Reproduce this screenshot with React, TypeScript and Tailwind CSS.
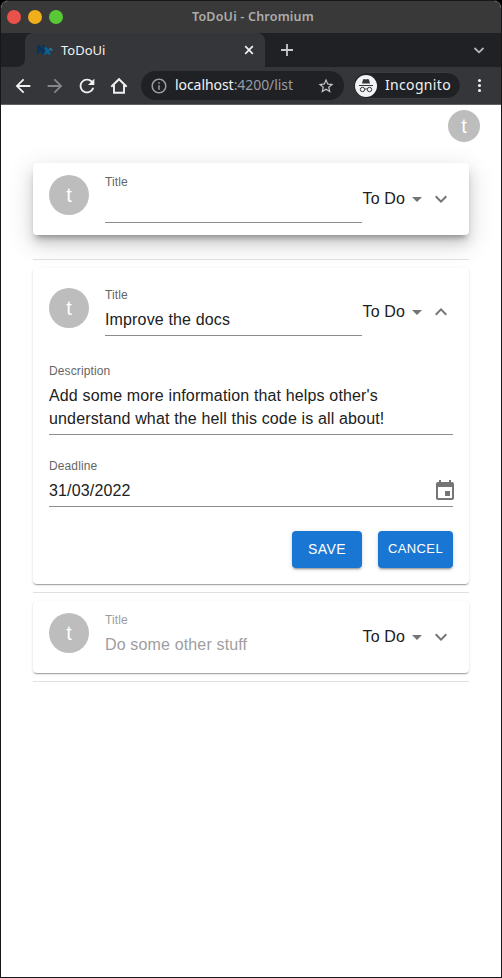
import React from "react";

const ARIMO = "font-['Liberation_Sans',sans-serif]";
const CHROME = "font-['Noto_Sans',sans-serif]";

const CARD_SHADOW =
  "shadow-[0_2px_1px_-1px_rgba(0,0,0,0.2),0_1px_1px_0_rgba(0,0,0,0.14),0_1px_3px_0_rgba(0,0,0,0.12)]";
const RAISED_SHADOW =
  "shadow-[0_5px_5px_-3px_rgba(0,0,0,0.24),0_7px_8px_-4px_rgba(0,0,0,0.12),0_8px_12px_1px_rgba(0,0,0,0.1),0_8px_26px_3px_rgba(0,0,0,0.12)]";
const BUTTON_SHADOW =
  "shadow-[0_3px_1px_-2px_rgba(0,0,0,0.2),0_2px_2px_0_rgba(0,0,0,0.14),0_1px_5px_0_rgba(0,0,0,0.12)]";

function Icon({ d, className }: { d: string; className: string }) {
  return (
    <svg viewBox="0 0 24 24" className={`shrink-0 fill-current ${className}`}>
      <path d={d} />
    </svg>
  );
}

function TitleBar() {
  return (
    <div className="flex h-8 shrink-0 items-center bg-[#393939] pl-1.5">
      <div className="flex w-[185px] gap-[7px]">
        <span className="size-3.5 rounded-full bg-[#e9524a]" />
        <span className="size-3.5 rounded-full bg-[#f1ae1b]" />
        <span className="size-3.5 rounded-full bg-[#59c837]" />
      </div>
      <span className="whitespace-nowrap text-[12.5px] font-semibold leading-4 tracking-[0.2px] text-[#adadab]">
        ToDoUi - Chromium
      </span>
    </div>
  );
}

function TabStrip() {
  return (
    <div className="flex h-[34px] shrink-0 bg-[#35363a]">
      <div className="w-6 rounded-br-lg bg-[#202124]" />
      <div className="flex flex-1 bg-[#202124]">
        <div className="flex w-60 items-center rounded-t-lg bg-[#35363a] pl-3 pr-[11px]">
          <svg viewBox="0 0 16 12" className="h-3 w-4 shrink-0">
            <path d="M0 1h2.500l3 4.500V1h2v9H5.300L2.300 5.500V10H0z" fill="#07345c" />
            <path d="M6.500 3.500h3l2 2.200L13 4.500c1.500 0 2.500.8 3 2.300l-3-.3L12.200 8l1.800 2.500h-3L10 9l-1.400 1.500H6L9 7z" fill="#0a629a" />
            <path d="M11.800 5.200c1-1.700 3.700-1 3.700 1.300-1-1.200-2-1.300-3-.7z" fill="#2f86b0" />
          </svg>
          <span className="ml-2 flex-1 text-[13px] leading-4 text-[#f1f1f2]">ToDoUi</span>
          <svg viewBox="0 0 10 10" className="size-2.5 shrink-0 stroke-[#f1f1f2]" fill="none" strokeWidth="1.7">
            <path d="M1.200 1.200l7.600 7.600M8.800 1.200L1.200 8.800" />
          </svg>
        </div>
        <div className="flex flex-1 items-center justify-between rounded-bl-lg bg-[#202124] pl-4 pr-4">
          <svg viewBox="0 0 12 12" className="size-3 stroke-[#c9cacc]" fill="none" strokeWidth="1.8">
            <path d="M6 0v12M0 6h12" />
          </svg>
          <svg viewBox="0 0 12 12" className="size-3 stroke-[#b5b6b9]" fill="none" strokeWidth="1.8">
            <path d="M1.500 4L6 8.300 10.500 4" />
          </svg>
        </div>
      </div>
    </div>
  );
}

const BACK = "M20 11H7.830l5.590-5.590L12 4l-8 8 8 8 1.410-1.410L7.830 13H20v-2z";
const FORWARD = "M12 4l-1.410 1.410L16.170 11H4v2h12.170l-5.580 5.590L12 20l8-8z";
const RELOAD =
  "M17.650 6.350C16.200 4.900 14.210 4 12 4c-4.420 0-7.990 3.580-7.990 8s3.570 8 7.990 8c3.730 0 6.840-2.550 7.730-6h-2.080c-.82 2.330-3.040 4-5.650 4-3.310 0-6-2.690-6-6s2.690-6 6-6c1.660 0 3.140.69 4.220 1.780L13 11h7V4l-2.350 2.350z";
const INFO =
  "M11 7h2v2h-2zm0 4h2v6h-2zm1-9C6.480 2 2 6.480 2 12s4.480 10 10 10 10-4.480 10-10S17.520 2 12 2zm0 18c-4.410 0-8-3.590-8-8s3.590-8 8-8 8 3.590 8 8-3.590 8-8 8z";
const STAR =
  "M22 9.240l-7.190-.62L12 2 9.190 8.630 2 9.240l5.460 4.730L5.820 21 12 17.270 18.180 21l-1.630-7.030L22 9.240zM12 15.400l-3.760 2.270 1-4.280-3.320-2.880 4.380-.38L12 6.100l1.710 4.040 4.380.38-3.320 2.880 1 4.280L12 15.400z";

function Toolbar() {
  return (
    <div className="flex h-[38px] shrink-0 items-center border-b border-[#606164] bg-[#35363a] pl-[11px] text-[#f1f1f2]">
      <Icon d={BACK} className="size-[22px]" />
      <Icon d={FORWARD} className="ml-2.5 size-[22px] text-[#85868a]" />
      <Icon d={RELOAD} className="ml-2.5 size-[22px]" />
      <svg viewBox="0 0 20 20" className="ml-[11px] size-5 shrink-0 stroke-current" fill="none" strokeWidth="1.9">
        <path d="M2.300 10.700L10 3.200l7.700 7.500M5 9v7.800h10V9" />
      </svg>
      <div className="ml-3 flex h-[29px] w-[203px] items-center rounded-full bg-[#202124] pl-[9px] pr-[9px]">
        <Icon d={INFO} className="size-[18px] text-[#9a9ca1]" />
        <span className="ml-[7px] flex-1 whitespace-nowrap pb-px text-[14px] leading-5 tracking-[-0.06px] text-[#9a9ca1]">
          <span className="text-[#f1f3f4]">localhost</span>:4200/list
        </span>
        <Icon d={STAR} className="size-[18px] text-[#c5c6c9]" />
      </div>
      <div className="ml-[9px] flex h-[27px] w-[108px] items-center rounded-full border border-[#3c3d40] bg-[#202124] pl-px">
        <svg viewBox="0 0 22 22" className="size-[22px] shrink-0">
          <circle cx="11" cy="11" r="11" fill="#f1f3f4" />
          <path d="M7 8.500l1-4 1.500-.5 1.500.5 1.500-.5 1.500.5 1 4z" fill="#35363a" />
          <path d="M4 10.500h14" stroke="#35363a" strokeWidth="1.100" />
          <g fill="none" stroke="#35363a" strokeWidth="1">
            <circle cx="7.500" cy="14.500" r="2.200" />
            <circle cx="14.500" cy="14.500" r="2.200" />
            <path d="M9.700 14.300c.8-.5 1.800-.5 2.600 0" />
          </g>
        </svg>
        <span className="ml-2 pb-px text-[14px] leading-5 tracking-[0.33px] text-[#f1f1f2]">Incognito</span>
      </div>
      <div className="ml-[17px] flex flex-col gap-0.5">
        <span className="size-[3px] rounded-full bg-current" />
        <span className="size-[3px] rounded-full bg-current" />
        <span className="size-[3px] rounded-full bg-current" />
      </div>
    </div>
  );
}

function Avatar({ small = false }: { small?: boolean }) {
  return (
    <div
      className={`flex shrink-0 items-center justify-center rounded-full bg-[#bdbdbd] text-[20px] leading-5 text-white ${
        small ? "size-8" : "size-10"
      }`}
    >
      t
    </div>
  );
}

function Field({
  label,
  children,
  className = "",
  disabled = false,
}: {
  label: string;
  children?: React.ReactNode;
  className?: string;
  disabled?: boolean;
}) {
  return (
    <div
      className={`flex flex-col ${className} ${
        disabled ? "text-[#9e9e9e]" : "border-b border-[#8c8c8c] text-[#212121]"
      }`}
    >
      <span className={`h-[17px] text-[12px] leading-[14px] tracking-[0.11px] ${disabled ? "" : "text-[#666666]"}`}>
        {label}
      </span>
      <div className="pt-[3px] text-[16px] leading-[23px] tracking-[0.15px]">{children}</div>
    </div>
  );
}

function Status({ open = false }: { open?: boolean }) {
  return (
    <div className="flex h-12 w-[91px] shrink-0 items-center text-[#212121]">
      <span className="w-[43px] whitespace-nowrap pb-0.5 pl-[0.5px] text-[16px] leading-[23px] tracking-[0.15px]">
        To Do
      </span>
      <Icon d="M7 10l5 5 5-5z" className="size-6 text-[#757575]" />
      <Icon
        d={
          open
            ? "M12 8l-6 6 1.410 1.410L12 10.830l4.590 4.580L18 14z"
            : "M16.590 8.590L12 13.170 7.410 8.590 6 10l6 6 6-6z"
        }
        className="size-6 text-[#757575]"
      />
    </div>
  );
}

function Summary({
  value,
  open = false,
  disabled = false,
}: {
  value?: string;
  open?: boolean;
  disabled?: boolean;
}) {
  return (
    <div className="flex h-12 items-start">
      <Avatar />
      <Field label="Title" disabled={disabled} className="ml-4 h-12 w-[257px]">
        {value}
      </Field>
      <Status open={open} />
    </div>
  );
}

function Divider() {
  return <div className="h-px shrink-0 bg-[#e0e0e0]" />;
}

function Button({ children, className }: { children: string; className: string }) {
  return (
    <button className={`h-[37px] rounded bg-[#1976d2] text-white ${BUTTON_SHADOW} ${className}`}>{children}</button>
  );
}

export default function App() {
  return (
    <div className="h-[978px] w-[502px] overflow-hidden bg-black">
      <div className={`flex h-full flex-col overflow-hidden rounded-t-lg border border-[#171719] bg-white ${CHROME}`}>
        <TitleBar />
        <TabStrip />
        <Toolbar />
        <main className={`flex flex-1 flex-col px-8 ${ARIMO}`}>
          <header className="-mr-[11px] flex h-[58px] justify-end pt-[5px]">
            <Avatar small />
          </header>
          <section className={`h-[72px] rounded bg-white px-4 pt-3 ${RAISED_SHADOW}`}>
            <Summary />
          </section>
          <div className="h-6 shrink-0" />
          <Divider />
          <section className={`mt-2 h-[316px] rounded bg-white px-4 pt-5 ${CARD_SHADOW}`}>
            <Summary value="Improve the docs" open />
            <Field label="Description" className="mt-7 h-[71px]">
              Add some more information that helps other's understand what the hell this code is all about!
            </Field>
            <Field label="Deadline" className="mt-6 h-12">
              <div className="flex h-[23px] items-center justify-between">
                <span>31/03/2022</span>
                <Icon
                  d="M17 12h-5v5h5v-5zM16 1v2H8V1H6v2H5c-1.110 0-1.990.9-1.990 2L3 19c0 1.100.89 2 2 2h14c1.100 0 2-.9 2-2V5c0-1.100-.9-2-2-2h-1V1h-2zm3 18H5V8h14v11z"
                  className="-mb-px -mr-1 size-6 text-[#757575]"
                />
              </div>
            </Field>
            <div className="mt-6 flex justify-end gap-4">
              <Button className="w-[70px] text-[14px] tracking-[0.4px]">SAVE</Button>
              <Button className="w-[75px] pb-0.5 text-[13px] tracking-[0.4px]">CANCEL</Button>
            </div>
          </section>
          <div className="h-2 shrink-0" />
          <Divider />
          <section className={`mt-2 h-[72px] rounded bg-white px-4 pt-3 ${CARD_SHADOW}`}>
            <Summary value="Do some other stuff" disabled />
          </section>
          <div className="h-2 shrink-0" />
          <Divider />
        </main>
      </div>
    </div>
  );
}
